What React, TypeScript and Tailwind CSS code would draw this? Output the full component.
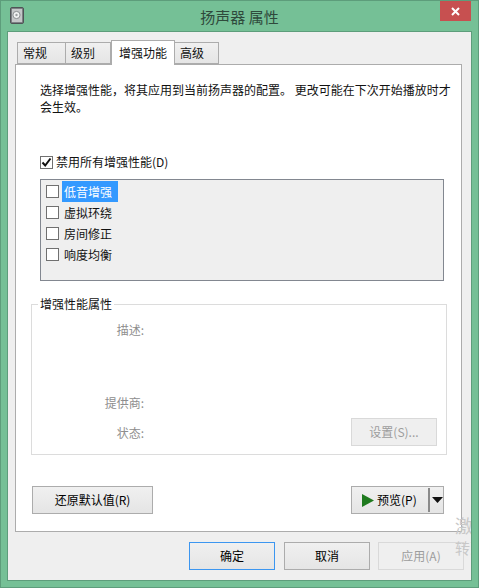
import type { ReactNode } from "react";

const font = "font-['Noto_Sans_CJK_SC',sans-serif]";

function Tab({ label, active, className }: { label: string; active?: boolean; className: string }) {
  return (
    <div
      className={
        "flex items-center border border-[#acacac] " +
        (active
          ? "z-10 -mb-px h-[25px] justify-center border-b-0 bg-white "
          : "h-[22px] bg-gradient-to-b from-[#f0f0f0] to-[#e5e5e5] pl-[5px] ") +
        className
      }
    >
      {label}
    </div>
  );
}

function Btn({
  children,
  className = "",
  disabled,
  focused,
}: {
  children: ReactNode;
  className?: string;
  disabled?: boolean;
  focused?: boolean;
}) {
  let look = "border-[#acacac] bg-gradient-to-b from-[#f0f0f0] to-[#e5e5e5] text-black";
  if (disabled) look = "border-[#d9d9d9] bg-[#efefef] text-[#9d9d9d]";
  if (focused) look = "border-[#3c96f0] bg-gradient-to-b from-[#f0f0f0] to-[#e5e5e5] text-black";
  return (
    <div className={"flex h-[28px] items-center justify-center border " + look + " " + className}>
      {children}
    </div>
  );
}

function Check({ checked }: { checked?: boolean }) {
  return (
    <span className="flex h-[13px] w-[13px] shrink-0 items-center justify-center border border-[#707070] bg-white">
      {checked ? (
        <svg viewBox="0 0 11 11" className="h-[11px] w-[11px]">
          <path d="M1.5 5.5 L4.2 8.5 L9.5 1.5" fill="none" stroke="#111" strokeWidth="2" />
        </svg>
      ) : null}
    </span>
  );
}

function ListRow({ label, selected }: { label: string; selected?: boolean }) {
  return (
    <div className="flex h-[21px] items-center pl-[5px]">
      <Check />
      <span
        className={
          "ml-[3px] flex h-[21px] items-center px-[2px] " +
          (selected ? "w-[56px] bg-[#3399ff] text-white" : "")
        }
      >
        {label}
      </span>
    </div>
  );
}

function PropRow({ label, className }: { label: string; className: string }) {
  return <div className={"w-[112px] text-right text-[#8e8e8e] " + className}>{label}</div>;
}

export default function App() {
  return (
    <div className={"relative h-[588px] w-[479px] overflow-hidden border border-[#5d9d7b] bg-[#75c096] text-[12px] leading-[16px] text-[#111] " + font}>
      <div className="relative flex h-[30px] items-center justify-center">
        <svg viewBox="0 0 14 17" className="absolute left-[9px] top-[6px] h-[17px] w-[14px]">
          <rect x="0.5" y="0.5" width="13" height="16" rx="1.5" fill="#7d8184" stroke="#4f5356" />
          <rect x="2" y="2" width="10" height="13" fill="#c4c7c8" />
          <circle cx="6.5" cy="8" r="3.6" fill="#f0f2f2" stroke="#8a8e90" />
          <circle cx="6.5" cy="8" r="1.2" fill="#9a9ea0" />
        </svg>
        <span className="pt-[2px] text-[15px] text-[#2f4a3c]">扬声器 属性</span>
        <div className="absolute right-[7px] top-0 flex h-[20px] w-[31px] items-center justify-center bg-[#c75050]">
          <svg viewBox="0 0 9 9" className="h-[9px] w-[9px]">
            <path d="M1 1 L8 8 M8 1 L1 8" stroke="#fff" strokeWidth="2" />
          </svg>
        </div>
      </div>

      <div className="mx-[6px] flex h-[550px] flex-col border border-[#5d9d7b] bg-[#efefef] pl-[7px] pr-[8px] pt-[7px]">
        <div className="flex h-[25px] items-end pl-[2px]">
          <Tab label="常规" className="w-[48px] border-r-0" />
          <Tab label="级别" className="w-[46px]" />
          <Tab label="增强功能" active className="w-[64px]" />
          <Tab label="高级" className="w-[44px] border-l-0" />
        </div>

        <div className="flex h-[468px] w-[447px] flex-col border border-[#acacac] bg-white pl-[24px] pt-[16px]">
          <p className="w-[415px] leading-[17px]">
            选择增强性能，将其应用到当前扬声器的配置。 更改可能在下次开始播放时才会生效。
          </p>
          <div className="mt-[39px] flex items-center gap-[3px]">
            <Check checked />
            <span>禁用所有增强性能(D)</span>
          </div>
          <div className="mt-[9px] h-[102px] w-[404px] border border-[#828790] bg-[#efefef] pt-[1px]">
            <ListRow label="低音增强" selected />
            <ListRow label="虚拟环绕" />
            <ListRow label="房间修正" />
            <ListRow label="响度均衡" />
          </div>

          <fieldset className="-ml-[9px] mt-[15px] h-[159px] w-[416px] border border-[#dcdcdc] pl-0 pr-0">
            <legend className="ml-[6px] px-[2px]">增强性能属性</legend>
            <PropRow label="描述:" className="mt-[10px]" />
            <PropRow label="提供商:" className="mt-[57px]" />
            <PropRow label="状态:" className="mt-[14px]" />
            <Btn disabled className="-mt-[23px] ml-[319px] w-[86px]">
              设置(S)...
            </Btn>
          </fieldset>

          <div className="-ml-[8px] mt-[31px] flex w-[412px] justify-between">
            <Btn className="w-[121px]">还原默认值(R)</Btn>
            <Btn className="w-[93px] justify-start pl-[10px]">
              <svg viewBox="0 0 12 13" className="h-[13px] w-[12px]">
                <path d="M0 0 L12 6.5 L0 13 Z" fill="#1f7a1f" />
              </svg>
              <span className="ml-[3px]">预览(P)</span>
              <span className="ml-[11px] h-[24px] w-[2px] bg-[#8a8a8a]" />
              <svg viewBox="0 0 11 6" className="ml-[2px] h-[6px] w-[11px]">
                <path d="M0 0 L11 0 L5.5 6 Z" fill="#111" />
              </svg>
            </Btn>
          </div>
        </div>

        <div className="mr-[-1px] mt-[10px] flex justify-end gap-[9px]">
          <Btn focused className="w-[86px]">确定</Btn>
          <Btn className="w-[86px]">取消</Btn>
          <Btn disabled className="-ml-px w-[86px]">应用(A)</Btn>
        </div>
      </div>

      <div className="absolute left-[454px] top-[512px] w-[16px] overflow-hidden whitespace-nowrap text-[18px] leading-[24px] text-[#c8c8c8]">激活</div>
      <div className="absolute left-[454px] top-[537px] w-[16px] overflow-hidden whitespace-nowrap text-[15px] leading-[20px] text-[#c8c8c8]">转到</div>
    </div>
  );
}
